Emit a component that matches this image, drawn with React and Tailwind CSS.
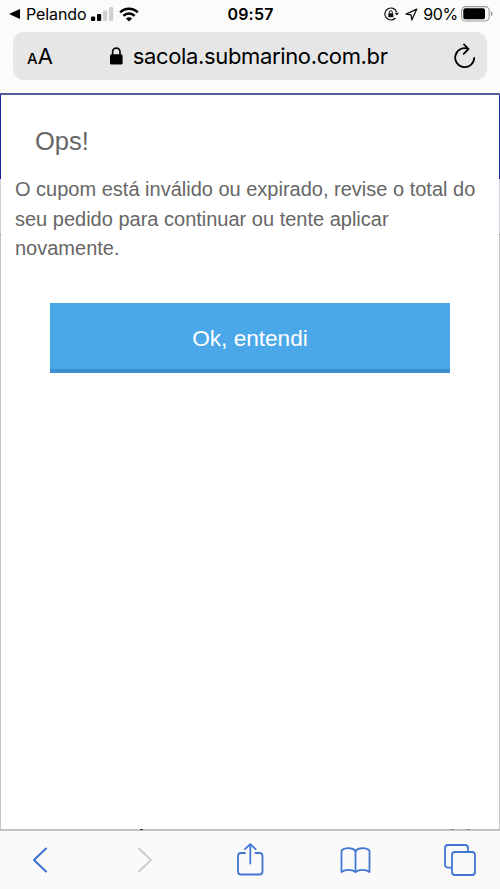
import React from 'react';

const SignalIcon = () => (
  <svg width="23" height="14" viewBox="0 0 23 14">
    <rect x="0" y="9.5" width="4.2" height="4.5" rx="1" fill="#000" />
    <rect x="6" y="7" width="4.2" height="7" rx="1" fill="#000" />
    <rect x="12" y="3.5" width="4.2" height="10.5" rx="1" fill="#d0d0d0" />
    <rect x="18" y="0" width="4.2" height="14" rx="1" fill="#d0d0d0" />
  </svg>
);

const WifiIcon = () => (
  <svg width="20" height="15" viewBox="0 0 20 15" fill="none" stroke="#000" strokeWidth="2.5">
    <path d="M1.2 5.4a12.6 12.6 0 0 1 17.6 0" />
    <path d="M4.4 8.9a8 8 0 0 1 11.2 0" />
    <path d="M10 14.6L6.9 11.6a4.5 4.5 0 0 1 6.2 0z" fill="#000" stroke="none" />
  </svg>
);

const RotationLockIcon = () => (
  <svg width="15" height="14" viewBox="0 0 15 14" fill="none" stroke="#111">
    <path d="M12.6 5.1A6 6 0 1 0 11.4 11" strokeWidth="1.2" />
    <path d="M10.8 5.8h4.1l-2 2.8z" fill="#111" stroke="none" />
    <rect x="4.3" y="6.3" width="5" height="4" rx="0.6" fill="#111" stroke="none" />
    <path d="M5.3 6.5V5.2a1.5 1.5 0 0 1 3 0v1.3" strokeWidth="1" />
  </svg>
);

const LocationIcon = () => (
  <svg width="13" height="13" viewBox="0 0 13 13" fill="none" stroke="#111" strokeWidth="1.3" strokeLinejoin="round">
    <path d="M11.8 1.1L1 6.2l5.1.7.7 5z" />
  </svg>
);

const BatteryIcon = () => (
  <svg width="32" height="16" viewBox="0 0 32 16">
    <rect x="0.6" y="0.6" width="27.6" height="14.4" rx="4" fill="none" stroke="#999" strokeWidth="1.1" />
    <rect x="2.3" y="2.3" width="21.7" height="11" rx="2" fill="#000" />
    <path d="M29.8 5.3q1.8.7 1.8 2.5t-1.8 2.5z" fill="#999" />
  </svg>
);

const LockIcon = () => (
  <svg width="13" height="18" viewBox="0 0 13 18">
    <rect x="0" y="7.3" width="12.6" height="10.2" rx="1.6" fill="#000" />
    <path d="M2.6 8V4.8a3.7 3.7 0 0 1 7.4 0V8" fill="none" stroke="#000" strokeWidth="1.6" />
  </svg>
);

const ReloadIcon = () => (
  <svg width="22" height="26" viewBox="0 0 22 26" fill="none" stroke="#000" strokeWidth="1.8" strokeLinecap="round" strokeLinejoin="round">
    <path d="M20.2 14.8A9.5 9.5 0 1 1 14 5.8" />
    <path d="M10 1.4l4.5 4.8-4.8 4.6" />
  </svg>
);

const BackIcon = () => (
  <svg width="14" height="26" viewBox="0 0 14 26" fill="none" stroke="#3b70d0" strokeWidth="2" strokeLinecap="round" strokeLinejoin="round">
    <path d="M13 1.5L1 13l12 11.5" />
  </svg>
);

const ForwardIcon = () => (
  <svg width="14" height="26" viewBox="0 0 14 26" fill="none" stroke="#cccccc" strokeWidth="1.8" strokeLinecap="round" strokeLinejoin="round">
    <path d="M1 1.5L13 13 1 24.5" />
  </svg>
);

const ShareIcon = () => (
  <svg width="27" height="33" viewBox="0 0 27 33" fill="none" stroke="#4177d1" strokeWidth="1.8" strokeLinecap="round" strokeLinejoin="round">
    <path d="M8 10H4a3 3 0 0 0-3 3v15.5a3 3 0 0 0 3 3h18.500a3 3 0 0 0 3-3V13a3 3 0 0 0-3-3h-4" />
    <path d="M13.3 20.5V1.2M8 6.200l5.300-5.100 5.300 5.100" />
  </svg>
);

const BookIcon = () => (
  <svg width="31" height="27" viewBox="0 0 31 27" fill="none" stroke="#4177d1" strokeWidth="1.8" strokeLinejoin="round">
    <path d="M15.5 4C12.5.2 4.5.2 1.5 3.6V25c3.5-2.8 10.5-2.8 14 0 3.5-2.8 10.5-2.8 14 0V3.6C26.5.2 18.5.2 15.5 4z" />
    <path d="M15.5 4v21" />
  </svg>
);

const TabsIcon = () => (
  <svg width="32" height="32" viewBox="0 0 32 32" fill="none" stroke="#4177d1" strokeWidth="1.8" strokeLinejoin="round">
    <path d="M8 23.7H4a3 3 0 0 1-3-3V4a3 3 0 0 1 3-3h17a3 3 0 0 1 3 3v4" />
    <rect x="8" y="8" width="23" height="23" rx="3" />
  </svg>
);

function StatusBar() {
  return (
    <div className="grid grid-cols-[1fr_auto_1fr] items-center h-7 pl-[9px] pr-[7px] text-black">
      <div className="flex items-center">
        <svg width="11" height="10" viewBox="0 0 11 10">
          <path d="M0 5L11 0v10z" />
        </svg>
        <span className="ml-[6px] text-[16px] tracking-[-0.1px]">Pelando</span>
        <span className="ml-[5px]"><SignalIcon /></span>
        <span className="ml-[5px]"><WifiIcon /></span>
      </div>
      <span className="mr-px text-[16px] font-semibold tracking-[0.2px]">09:57</span>
      <div className="flex items-center justify-end">
        <RotationLockIcon />
        <span className="ml-[6px]"><LocationIcon /></span>
        <span className="ml-[5px] text-[16px] tracking-[-0.3px]">90%</span>
        <span className="ml-[3px]"><BatteryIcon /></span>
      </div>
    </div>
  );
}

function AddressBar() {
  return (
    <div className="flex items-center h-12 mx-[13px] mt-1 pl-[14px] pr-[11px] rounded-[11px] bg-[#e6e6e6] text-black">
      <button className="flex items-baseline leading-none">
        <span className="text-[15px] font-medium">A</span>
        <span className="text-[22px]">A</span>
      </button>
      <div className="flex-1 flex items-center pl-[57px]">
        <LockIcon />
        <span className="ml-[10px] text-[22px] leading-none tracking-[-0.36px] whitespace-nowrap">sacola.submarino.com.br</span>
      </div>
      <button><ReloadIcon /></button>
    </div>
  );
}

// Edge of the page left visible beside the modal
function PageEdge() {
  return (
    <div className="w-px flex flex-col">
      <div className="h-[84px] bg-[#1b23a8]" />
      <div className="h-[55px] bg-[#d0d0d6]" />
      <div className="h-px bg-[#999]" />
      <div className="flex-1 bg-[#c4c4c4]" />
    </div>
  );
}

// Bottom border of the modal, with the tips of the page text showing under it
function BottomEdge() {
  return (
    <div className="flex h-[2px] bg-[#c2c2c2]">
      <div className="w-[3px] h-px ml-[140px] bg-[#333]" />
      <div className="w-[3px] h-px ml-[308px] bg-[#888]" />
      <div className="w-[3px] h-px ml-[13px] bg-[#888]" />
    </div>
  );
}

export default function App() {
  return (
    <div className="w-[500px] h-[889px] flex flex-col overflow-hidden bg-white font-['Inter',sans-serif]">
      <header className="h-[93px] bg-[#fbfbfa]">
        <StatusBar />
        <AddressBar />
      </header>

      <main className="flex-1 flex border-t-2 border-t-[#575b96]">
        <PageEdge />
        <section className="flex-1 font-['Liberation_Sans',sans-serif] text-[#666]">
          <h1 className="mt-[30px] ml-[34px] text-[25.5px] leading-8">Ops!</h1>
          <p className="mt-[18px] ml-[14px] text-[20px] leading-[29.5px] whitespace-nowrap">
            O cupom está inválido ou expirado, revise o total do<br />
            seu pedido para continuar ou tente aplicar<br />
            novamente.
          </p>
          <button className="block w-[400px] h-[70px] mt-[39px] mx-auto pt-[6px] bg-[#4ba8e8] border-b-4 border-[#3c8fce] text-white text-[22.6px]">
            Ok, entendi
          </button>
        </section>
        <PageEdge />
      </main>
      <BottomEdge />

      <nav className="flex items-center h-[58px] bg-[#fafafa] pl-[33px] pr-6">
        <button><BackIcon /></button>
        <button className="ml-[91px]"><ForwardIcon /></button>
        <button className="ml-[85px] mb-[2px]"><ShareIcon /></button>
        <button className="ml-[76px]"><BookIcon /></button>
        <button className="ml-auto"><TabsIcon /></button>
      </nav>
    </div>
  );
}
